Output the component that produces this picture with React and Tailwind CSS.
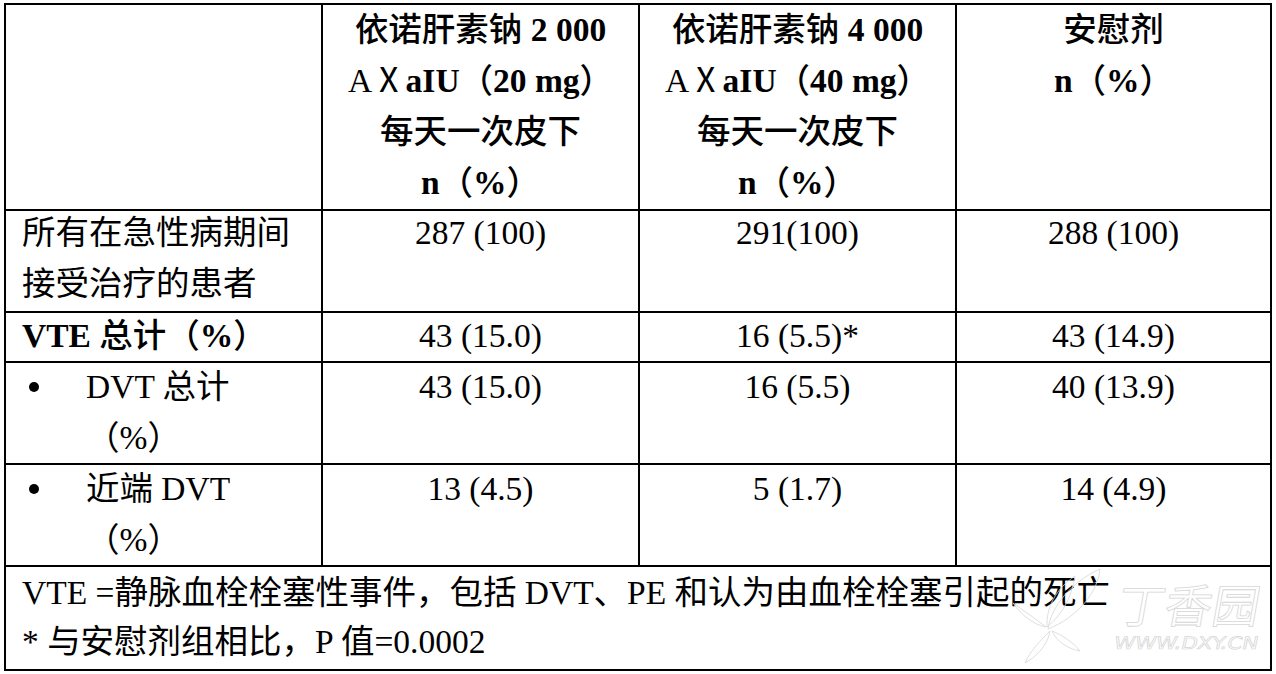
function Bullet() {
  return (
    <div className="w-[64px] shrink-0 pt-[19px] pl-[7px]">
      <span className="block w-[10px] h-[10px] rounded-full bg-black"></span>
    </div>
  );
}

function Zh({ children }) {
  return <span className="font-medium">{children}</span>;
}

export default function App() {
  const c = "border-r-2 border-b-2 border-black";
  const cl = "border-b-2 border-black";
  return (
    <div className="w-[1276px] h-[674px] bg-white pt-[3px] pl-[4px] overflow-hidden">
      <div className="relative w-[1268px] border-2 border-black grid grid-cols-[317px_317px_317px_313px] grid-rows-[206px_102px_50px_102px_102px_102px] text-black text-[33.5px] leading-[51px] font-['Liberation_Serif','Noto_Sans_CJK_SC',serif]">
        {/* header */}
        <div className={c}></div>
        <div className={`${c} text-center font-bold`}>
          <div className="-mt-[1px]"><Zh>依诺肝素钠</Zh> 2 000</div>
          <div><span className="font-normal">AⅩ</span>aIU<Zh>（</Zh>20 mg<Zh>）</Zh></div>
          <div><Zh>每天一次皮下</Zh></div>
          <div>n<Zh>（</Zh>%<Zh>）</Zh></div>
        </div>
        <div className={`${c} text-center font-bold`}>
          <div className="-mt-[1px]"><Zh>依诺肝素钠</Zh> 4 000</div>
          <div><span className="font-normal">AⅩ</span>aIU<Zh>（</Zh>40 mg<Zh>）</Zh></div>
          <div><Zh>每天一次皮下</Zh></div>
          <div>n<Zh>（</Zh>%<Zh>）</Zh></div>
        </div>
        <div className={`${cl} text-center font-bold`}>
          <div className="-mt-[1px]"><Zh>安慰剂</Zh></div>
          <div>n<Zh>（</Zh>%<Zh>）</Zh></div>
        </div>

        {/* row 1 */}
        <div className={`${c} pl-[16px]`}>
          <div className="-mt-[4px]">所有在急性病期间</div>
          <div>接受治疗的患者</div>
        </div>
        <div className={`${c} text-center`}><div className="-mt-[4px]">287 (100)</div></div>
        <div className={`${c} text-center`}><div className="-mt-[4px]">291(100)</div></div>
        <div className={`${cl} text-center`}><div className="-mt-[4px]">288 (100)</div></div>

        {/* row 2 */}
        <div className={`${c} pl-[16px] font-bold`}><div className="-mt-[3px]">VTE <Zh>总计（</Zh>%<Zh>）</Zh></div></div>
        <div className={`${c} text-center`}><div className="-mt-[3px]">43 (15.0)</div></div>
        <div className={`${c} text-center`}><div className="-mt-[3px]">16 (5.5)*</div></div>
        <div className={`${cl} text-center`}><div className="-mt-[3px]">43 (14.9)</div></div>

        {/* row 3 */}
        <div className={`${c} pl-[16px] flex`}>
          <Bullet />
          <div className="-mt-[2px]">
            <div>DVT 总计</div>
            <div>（%）</div>
          </div>
        </div>
        <div className={`${c} text-center`}><div className="-mt-[2px]">43 (15.0)</div></div>
        <div className={`${c} text-center`}><div className="-mt-[2px]">16 (5.5)</div></div>
        <div className={`${cl} text-center`}><div className="-mt-[2px]">40 (13.9)</div></div>

        {/* row 4 */}
        <div className={`${c} pl-[16px] flex`}>
          <Bullet />
          <div className="-mt-[2px]">
            <div>近端 DVT</div>
            <div>（%）</div>
          </div>
        </div>
        <div className={`${c} text-center`}><div className="-mt-[2px]">13 (4.5)</div></div>
        <div className={`${c} text-center`}><div className="-mt-[2px]">5 (1.7)</div></div>
        <div className={`${cl} text-center`}><div className="-mt-[2px]">14 (4.9)</div></div>

        {/* footnote */}
        <div className="col-span-4 pl-[16px] relative">
          <div>VTE =静脉血栓栓塞性事件，包括 DVT、PE 和认为由血栓栓塞引起的死亡</div>
          <div className="-mt-[2px]">* 与安慰剂组相比，P 值=0.0002</div>
          <svg className="absolute left-[1000px] top-0 pointer-events-none" width="262" height="100" viewBox="0 0 262 100" fill="none" stroke="#d6d6d6" strokeWidth="0.8">
            <path d="M42 62 C 45 40, 65 15, 94 2 C 92 25, 72 50, 42 62 Z" />
            <path d="M41 60 C 40 40, 50 22, 69 9 C 66 30, 56 48, 41 60 Z" />
            <path d="M40 60 C 30 52, 18 44, 7 36 C 15 48, 28 58, 40 60 Z" />
            <path d="M44 64 C 36 72, 24 84, 19 96 C 30 90, 42 78, 44 64 Z" />
            <path d="M46 64 C 56 68, 68 76, 74 84 C 62 82, 50 74, 46 64 Z" />
            <g transform="translate(109 56) skewX(-10)">
              <text x="0" y="0" fontSize="46" fontFamily="'Noto Sans CJK SC', sans-serif" fill="none" stroke="#d6d6d6" strokeWidth="0.8" textLength="142" lengthAdjust="spacingAndGlyphs">丁香园</text>
            </g>
            <g transform="translate(107 82) skewX(-12)">
              <text x="0" y="0" fontSize="17" fontFamily="'DejaVu Sans', sans-serif" fill="none" stroke="#d6d6d6" strokeWidth="0.7" textLength="144" lengthAdjust="spacingAndGlyphs">WWW.DXY.CN</text>
            </g>
          </svg>
        </div>
      </div>
    </div>
  );
}
